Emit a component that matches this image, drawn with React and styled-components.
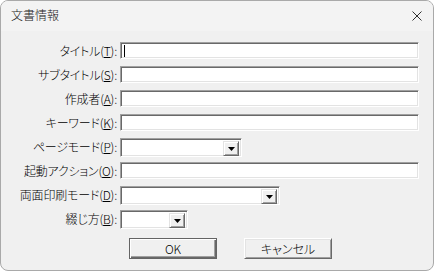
import React from "react";
import styled, { createGlobalStyle } from "styled-components";

const Global = createGlobalStyle`
  html, body { margin: 0; padding: 0; background: #ffffff; }
  body { font-family: "Noto Sans CJK JP", "Noto Sans", sans-serif; }
`;

const Window = styled.div`
  width: 434px;
  height: 271px;
  box-sizing: border-box;
  border: 1px solid #a9a9a9;
  border-radius: 8px;
  overflow: hidden;
  display: flex;
  flex-direction: column;
  background: #f0f0f0;
`;

const TitleBar = styled.div`
  height: 30px;
  flex: none;
  background: #f3f3f3;
  display: flex;
  align-items: center;
  justify-content: space-between;
  padding: 0 11px 0 10px;
  font-size: 12px;
  font-weight: 300;
  color: #1a1a1a;
`;

const Title = styled.span`
  line-height: 14px;
  margin-top: -2px;
`;

const CloseIcon = styled.svg`
  width: 10px;
  height: 10px;
  margin-top: -1px;
`;

const Body = styled.div`
  flex: 1;
  display: flex;
  flex-direction: column;
  padding-top: 11px;
`;

const Form = styled.div`
  display: grid;
  grid-template-columns: 116px auto;
  grid-auto-rows: 24px;
  column-gap: 3px;
  font-size: 12px;
  font-weight: 300;
  font-feature-settings: "palt";
  color: #000;
`;

const Label = styled.label`
  text-align: right;
  line-height: 17px;
  height: 17px;
  white-space: nowrap;
  letter-spacing: -0.2px;
`;

const Key = styled.span`
  text-decoration: underline;
  text-underline-offset: 1px;
`;

const sunken = `
  box-sizing: border-box;
  background: #ffffff;
  border-top: 1px solid #a0a0a0;
  border-left: 1px solid #a0a0a0;
  border-right: 1px solid #ffffff;
  border-bottom: 1px solid #ffffff;
  box-shadow: inset 1px 1px 0 #696969, inset -1px -1px 0 #e3e3e3;
`;

const TextBox = styled.div`
  ${sunken}
  width: 299px;
  height: 17px;
  position: relative;
`;

const Caret = styled.span`
  position: absolute;
  left: 3px;
  top: 2px;
  width: 1px;
  height: 12px;
  background: #000;
`;

const Combo = styled.div`
  ${sunken}
  width: ${(p) => p.$w}px;
  height: 19px;
  display: flex;
  justify-content: flex-end;
  padding: 2px;
`;

const DropButton = styled.div`
  box-sizing: border-box;
  width: 16px;
  height: 15px;
  background: #f0f0f0;
  border-top: 1px solid #e3e3e3;
  border-left: 1px solid #e3e3e3;
  border-right: 1px solid #696969;
  border-bottom: 1px solid #696969;
  box-shadow: inset 1px 1px 0 #ffffff, inset -1px -1px 0 #a0a0a0;
  display: flex;
  align-items: center;
  justify-content: center;
`;

const Arrow = styled.svg`
  width: 7px;
  height: 4px;
  display: block;
`;

const ButtonRow = styled.div`
  display: flex;
  gap: 27px;
  padding-left: 128px;
  margin-top: 4px;
`;

const Button = styled.div`
  box-sizing: border-box;
  width: 88px;
  height: 21px;
  background: #f0f0f0;
  font-size: 12px;
  font-weight: 300;
  font-feature-settings: "palt";
  display: flex;
  align-items: center;
  justify-content: center;
  color: #000;
  ${(p) =>
    p.$default
      ? `border: 1px solid #646464;
         box-shadow: inset 1px 1px 0 #ffffff, inset -1px -1px 0 #696969, inset -2px -2px 0 #a0a0a0;`
      : `border-top: 1px solid #ffffff;
         border-left: 1px solid #ffffff;
         border-right: 1px solid #696969;
         border-bottom: 1px solid #696969;
         box-shadow: inset 1px 1px 0 #e3e3e3, inset -1px -1px 0 #a0a0a0;`}
`;

const DropDown = ({ w }) => (
  <Combo $w={w}>
    <DropButton>
      <Arrow viewBox="0 0 7 4">
        <path d="M0 0H7L3.5 4Z" fill="#000" />
      </Arrow>
    </DropButton>
  </Combo>
);

const L = ({ text, k }) => (
  <Label>
    {text}(<Key>{k}</Key>):
  </Label>
);

export default function App() {
  return (
    <>
      <Global />
      <Window>
        <TitleBar>
          <Title>文書情報</Title>
          <CloseIcon viewBox="0 0 10 10">
            <path d="M0.5 0.5L9.5 9.5M9.5 0.5L0.5 9.5" stroke="#1a1a1a" strokeWidth="0.9" />
          </CloseIcon>
        </TitleBar>
        <Body>
          <Form>
            <L text="タイトル" k="T" />
            <TextBox>
              <Caret />
            </TextBox>
            <L text="サブタイトル" k="S" />
            <TextBox />
            <L text="作成者" k="A" />
            <TextBox />
            <L text="キーワード" k="K" />
            <TextBox />
            <L text="ページモード" k="P" />
            <DropDown w={122} />
            <L text="起動アクション" k="O" />
            <TextBox />
            <L text="両面印刷モード" k="D" />
            <DropDown w={160} />
            <L text="綴じ方" k="B" />
            <DropDown w={68} />
          </Form>
          <ButtonRow>
            <Button $default>OK</Button>
            <Button>キャンセル</Button>
          </ButtonRow>
        </Body>
      </Window>
    </>
  );
}
